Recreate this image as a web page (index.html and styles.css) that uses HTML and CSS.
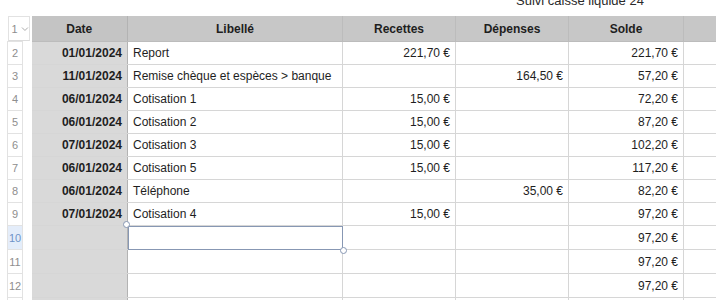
FILE: index.html
```html
<!DOCTYPE html>
<html>

<head>
    <meta charset="UTF-8">
    <title>Suivi caisse liquide 24</title>
    <link rel="stylesheet" href="styles.css">
</head>

<body>
<div class="sheet">

    <div class="title">Suivi caisse liquide 24</div> <!-- titre du tableau, coupé en haut -->

    <table class="grid">
        <colgroup>
            <col class="c-rn">
            <col class="c-gap">
            <col class="c-date">
            <col class="c-lib">
            <col class="c-rec">
            <col class="c-dep">
            <col class="c-solde">
            <col class="c-extra">
        </colgroup>

        <tr class="head">
            <td class="rn-first" colspan="2">
                <span class="rn-box">1
                    <svg class="chev" width="8" height="6" viewBox="0 0 8 6"><path d="M1 1.5 L4 4.5 L7 1.5" fill="none" stroke="#a9a9a9" stroke-width="1"/></svg>
                </span>
            </td>
            <th class="date">Date</th>
            <th>Libellé</th>
            <th>Recettes</th>
            <th>Dépenses</th>
            <th>Solde</th>
            <th class="last"></th>
        </tr>

        <tr>
            <td class="rn">2</td><td class="gap"></td>
            <td class="date">01/01/2024</td><td class="txt">Report</td>
            <td class="num">221,70 €</td><td class="num"></td><td class="num">221,70 €</td><td class="last"></td>
        </tr>
        <tr>
            <td class="rn">3</td><td class="gap"></td>
            <td class="date">11/01/2024</td><td class="txt">Remise chèque et espèces &gt; banque</td>
            <td class="num"></td><td class="num">164,50 €</td><td class="num">57,20 €</td><td class="last"></td>
        </tr>
        <tr>
            <td class="rn">4</td><td class="gap"></td>
            <td class="date">06/01/2024</td><td class="txt">Cotisation 1</td>
            <td class="num">15,00 €</td><td class="num"></td><td class="num">72,20 €</td><td class="last"></td>
        </tr>
        <tr>
            <td class="rn">5</td><td class="gap"></td>
            <td class="date">06/01/2024</td><td class="txt">Cotisation 2</td>
            <td class="num">15,00 €</td><td class="num"></td><td class="num">87,20 €</td><td class="last"></td>
        </tr>
        <tr>
            <td class="rn">6</td><td class="gap"></td>
            <td class="date">07/01/2024</td><td class="txt">Cotisation 3</td>
            <td class="num">15,00 €</td><td class="num"></td><td class="num">102,20 €</td><td class="last"></td>
        </tr>
        <tr>
            <td class="rn">7</td><td class="gap"></td>
            <td class="date">06/01/2024</td><td class="txt">Cotisation 5</td>
            <td class="num">15,00 €</td><td class="num"></td><td class="num">117,20 €</td><td class="last"></td>
        </tr>
        <tr>
            <td class="rn">8</td><td class="gap"></td>
            <td class="date">06/01/2024</td><td class="txt">Téléphone</td>
            <td class="num"></td><td class="num">35,00 €</td><td class="num">82,20 €</td><td class="last"></td>
        </tr>
        <tr>
            <td class="rn">9</td><td class="gap"></td>
            <td class="date">07/01/2024</td><td class="txt">Cotisation 4</td>
            <td class="num">15,00 €</td><td class="num"></td><td class="num">97,20 €</td><td class="last"></td>
        </tr>
        <tr class="tall">
            <td class="rn rn-sel">10</td><td class="gap"></td>
            <td class="date"></td>
            <td class="txt sel">
                <span class="knob knob-tl"></span>
                <span class="knob knob-br"></span>
            </td>
            <td class="num"></td><td class="num"></td><td class="num">97,20 €</td><td class="last"></td>
        </tr>
        <tr class="tall">
            <td class="rn">11</td><td class="gap"></td>
            <td class="date"></td><td class="txt"></td>
            <td class="num"></td><td class="num"></td><td class="num">97,20 €</td><td class="last"></td>
        </tr>
        <tr class="tall">
            <td class="rn">12</td><td class="gap"></td>
            <td class="date"></td><td class="txt"></td>
            <td class="num"></td><td class="num"></td><td class="num">97,20 €</td><td class="last"></td>
        </tr>
        <tr>
            <td class="rn"></td><td class="gap"></td>
            <td class="date"></td><td class="txt"></td>
            <td class="num"></td><td class="num"></td><td class="num"></td><td class="last"></td>
        </tr>
    </table>

</div>
</body>

</html>
```

FILE: styles.css
```css
html, body {
    margin: 0;
    background: #ffffff;
    overflow: hidden;
}

.sheet {
    padding-left: 7px;
    font-family: "Liberation Sans", Arial, sans-serif;
    color: #1e1e1e;
}

.title {
    margin-top: -7px;
    padding-left: 509px;
    font-size: 13px;
    line-height: 15px;
    color: #2a2a2a;
}

.grid {
    margin-top: 8px;
    border-collapse: collapse;
    table-layout: fixed;
    width: 709px;
    font-size: 12px;
}

.c-rn { width: 15px; }
.c-gap { width: 9px; }
.c-date { width: 96px; }
.c-lib { width: 215px; }
.c-rec { width: 113px; }
.c-dep { width: 113px; }
.c-solde { width: 115px; }
.c-extra { width: 33px; }

.grid td,
.grid th {
    height: 22px;
    padding: 0 5px;
    border: 1px solid #d6d6d6;
    white-space: nowrap;
    overflow: visible;
}

.grid tr.tall td {
    height: 23px;
}

.grid .last {
    border-right: none;
}

/* ligne d'en-tête */
.head th {
    height: 24px;
    background: #c7c7c7;
    font-weight: bold;
    text-align: center;
    border-color: #bcbcbc;
    border-top: none;
}

.head th.date {
    background: #c4c4c4;
    border-right-color: #acacac;
}

.rn-first {
    padding: 0 !important;
    border: none !important;
    vertical-align: top;
}

.rn-box {
    display: flex;
    align-items: center;
    gap: 3px;
    box-sizing: border-box;
    width: 22px;
    height: 25px;
    padding-left: 3px;
    border: 1px solid #e2e2e2;
    border-bottom-color: #dcdcdc;
    font-size: 11px;
    color: #8e8e8e;
}

/* numéros de ligne */
.rn {
    padding: 0 !important;
    text-align: center;
    font-size: 11px;
    color: #8e8e8e;
    border-color: #e2e2e2 !important;
}

.rn-sel {
    background: #e4edfa;
    color: #6f93c8;
}

.gap {
    border: none !important;
}

.date {
    background: #d9d9d9;
    font-weight: bold;
    text-align: right;
    border-right-color: #b3b3b3 !important;
    border-left: none !important;
    border-color: #cdcdcd;
}

.txt {
    text-align: left;
}

.num {
    text-align: right;
}

/* cellule sélectionnée */
.sel {
    position: relative;
    outline: 1.5px solid #8797b3;
    outline-offset: -1px;
}

.knob {
    position: absolute;
    width: 5px;
    height: 5px;
    border: 1px solid #8797b3;
    border-radius: 50%;
    background: #ffffff;
}

.knob-tl {
    left: -5px;
    top: -5px;
}

.knob-br {
    right: -5px;
    bottom: -5px;
}
```
